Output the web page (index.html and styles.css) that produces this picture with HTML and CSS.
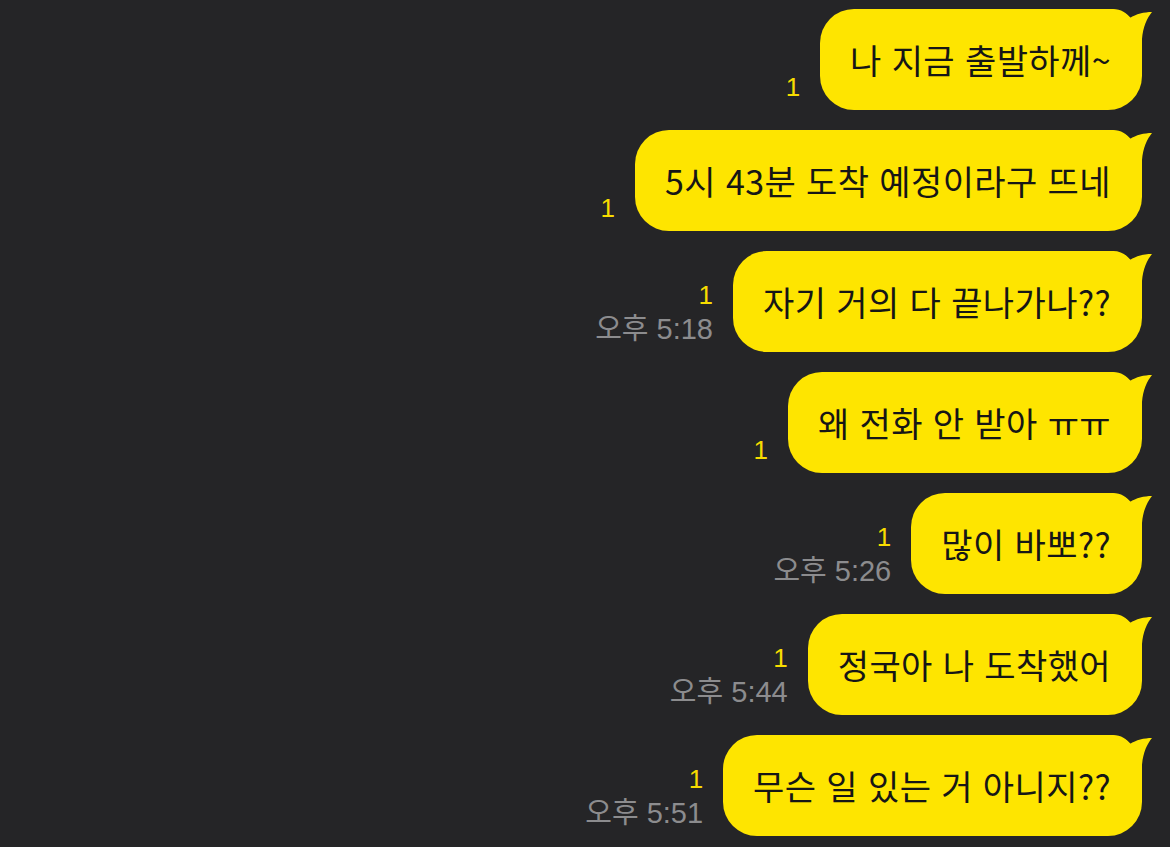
FILE: index.html
```html
<!DOCTYPE html>
<html lang="ko">
<head>
    <meta charset="UTF-8">
    <meta name="viewport" content="width=device-width, initial-scale=1.0">
    <title>Chat</title>
    <link rel="stylesheet" href="styles.css">
</head>
<body>
    <div class="chat">
        <div class="row">
            <div class="meta"><span class="unread">1</span></div>
            <div class="bubble"><svg class="tail" viewBox="0 0 52 50"><path d="M0,0 L11,0 C19,0 25,4 28,9 C34,5 42,3 50,3 C45,9 41,18 40,30 L40,50 L0,50 Z"/></svg><span class="text">나 지금 출발하께~</span></div>
        </div>
        <div class="row">
            <div class="meta"><span class="unread">1</span></div>
            <div class="bubble"><svg class="tail" viewBox="0 0 52 50"><path d="M0,0 L11,0 C19,0 25,4 28,9 C34,5 42,3 50,3 C45,9 41,18 40,30 L40,50 L0,50 Z"/></svg><span class="text">5시 43분 도착 예정이라구 뜨네</span></div>
        </div>
        <div class="row">
            <div class="meta"><span class="unread">1</span><span class="time">오후 5:18</span></div>
            <div class="bubble"><svg class="tail" viewBox="0 0 52 50"><path d="M0,0 L11,0 C19,0 25,4 28,9 C34,5 42,3 50,3 C45,9 41,18 40,30 L40,50 L0,50 Z"/></svg><span class="text">자기 거의 다 끝나가나??</span></div>
        </div>
        <div class="row">
            <div class="meta"><span class="unread">1</span></div>
            <div class="bubble"><svg class="tail" viewBox="0 0 52 50"><path d="M0,0 L11,0 C19,0 25,4 28,9 C34,5 42,3 50,3 C45,9 41,18 40,30 L40,50 L0,50 Z"/></svg><span class="text">왜 전화 안 받아 ㅠㅠ</span></div>
        </div>
        <div class="row">
            <div class="meta"><span class="unread">1</span><span class="time">오후 5:26</span></div>
            <div class="bubble"><svg class="tail" viewBox="0 0 52 50"><path d="M0,0 L11,0 C19,0 25,4 28,9 C34,5 42,3 50,3 C45,9 41,18 40,30 L40,50 L0,50 Z"/></svg><span class="text">많이 바뽀??</span></div>
        </div>
        <div class="row">
            <div class="meta"><span class="unread">1</span><span class="time">오후 5:44</span></div>
            <div class="bubble"><svg class="tail" viewBox="0 0 52 50"><path d="M0,0 L11,0 C19,0 25,4 28,9 C34,5 42,3 50,3 C45,9 41,18 40,30 L40,50 L0,50 Z"/></svg><span class="text">정국아 나 도착했어</span></div>
        </div>
        <div class="row">
            <div class="meta"><span class="unread">1</span><span class="time">오후 5:51</span></div>
            <div class="bubble"><svg class="tail" viewBox="0 0 52 50"><path d="M0,0 L11,0 C19,0 25,4 28,9 C34,5 42,3 50,3 C45,9 41,18 40,30 L40,50 L0,50 Z"/></svg><span class="text">무슨 일 있는 거 아니지??</span></div>
        </div>
    </div>
</body>
</html>
```

FILE: styles.css
```css
body {
    margin: 0;
    background-color: #252527;
    font-family: "Noto Sans CJK KR", "Noto Sans", sans-serif;
    height: 847px;
    overflow: hidden;
}
.chat {
    display: flex;
    flex-direction: column;
    gap: 20px;
    padding: 9px 28px 0 0;
}
.row {
    display: flex;
    justify-content: flex-end;
    align-items: flex-end;
    gap: 20px;
}
.meta {
    display: flex;
    flex-direction: column;
    align-items: flex-end;
    padding-bottom: 6px;
    font-family: "Liberation Sans", "Noto Sans CJK KR", sans-serif;
}
.unread {
    color: #f7dc00;
    font-size: 26px;
    line-height: 34px;
}
.time {
    color: #8c8c8e;
    font-size: 29px;
    line-height: 34px;
}
.bubble {
    position: relative;
    display: flex;
    align-items: center;
    height: 101px;
    box-sizing: border-box;
    padding: 0 31px 0 30px;
    background-color: #fee500;
    border-radius: 34px;
    color: #161616;
    font-size: 34px;
    letter-spacing: 0.4px;
    white-space: nowrap;
}
.text {
    position: relative;
}
.tail {
    position: absolute;
    top: 0;
    right: -12px;
    width: 52px;
    height: 50px;
    fill: #fee500;
}
```
